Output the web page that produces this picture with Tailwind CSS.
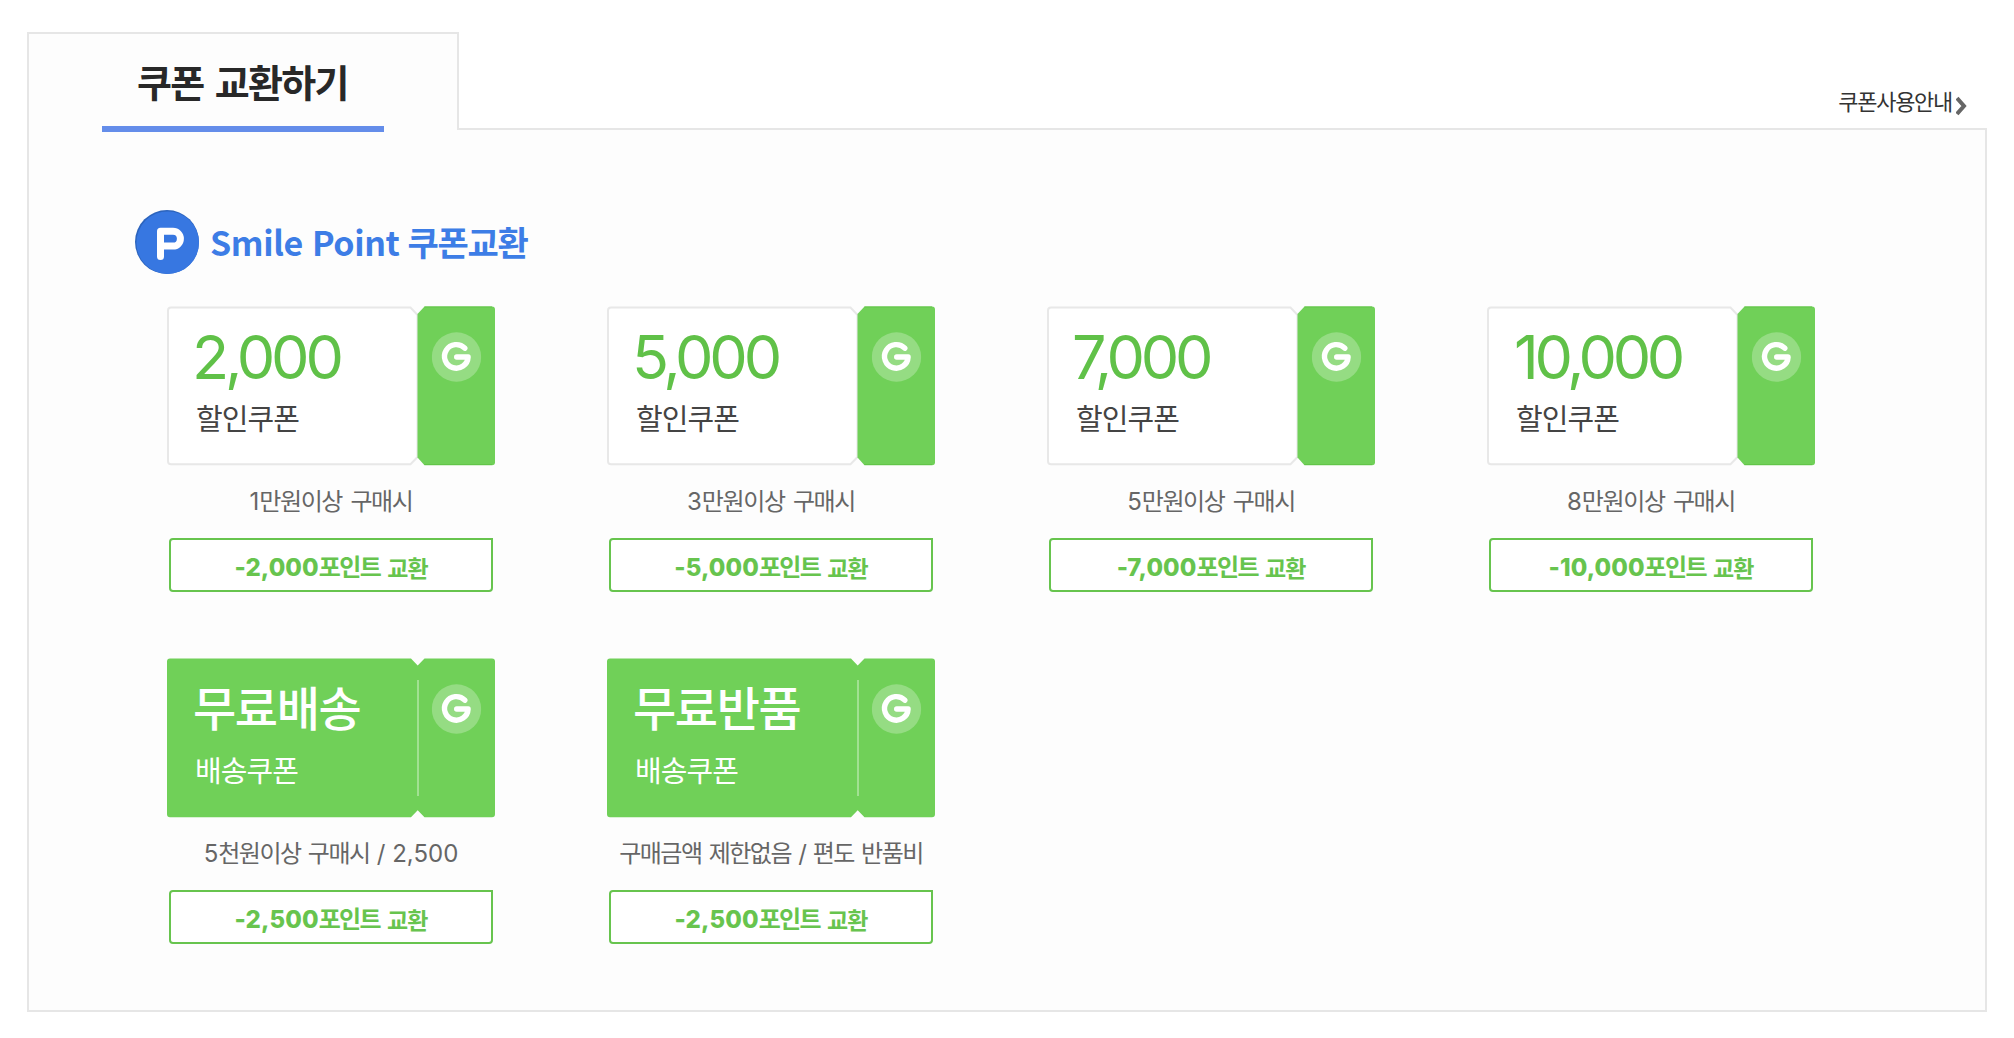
<!DOCTYPE html>
<html lang="ko">
<head>
    <meta charset="UTF-8">
    <meta name="viewport" content="width=device-width, initial-scale=1.0">
    <title>쿠폰 교환하기</title>
    <!-- TailwindCSS -->
    <script src="https://cdn.jsdelivr.net/npm/@tailwindcss/browser@4"></script>
    <style>
        body {
            font-family: 'Inter', 'Noto Sans CJK KR', sans-serif;
        }
    </style>
</head>
<body class="bg-white">
    <!-- 공통 SVG -->
    <svg class="hidden">
        <symbol id="badge-g" viewBox="0 0 50 50">
            <circle cx="25" cy="25" r="24.7" fill="#fff" fill-opacity=".26"/>
            <path d="M33.3 16.2A11.8 11.8 0 1 0 36.6 25H25.2" fill="none" stroke="#fff" stroke-width="5.4" stroke-linecap="round" stroke-linejoin="round"/>
        </symbol>
        <symbol id="ticket-white" viewBox="0 0 328 160">
            <path d="M4 1.5H243.5L250.5 9V151L243.5 158.2H4Q1 158.2 1 155.2V4.500Q1 1.500 4 1.500Z" fill="#fff" stroke="#e8e8e8" stroke-width="2"/>
            <path d="M257.500 .5H325Q328 .5 328 3.500V156.200Q328 159.200 325 159.200H257.500L250.500 151.500V8Z" fill="#70d058"/>
            <path d="M257.500 1H325M257.500 158.500H325" stroke="#62c549" stroke-width="1"/>
            <use href="#badge-g" x="264.500" y="26" width="50" height="50"/>
        </symbol>
        <symbol id="ticket-green" viewBox="0 0 328 160">
            <path d="M3 .5H244L250.700 7.500L257.500 .5H325Q328 .5 328 3.500V156.200Q328 159.200 325 159.200H257.500L250.700 152.200L244 159.200H3Q0 159.200 0 156.200V3.500Q0 .5 3 .5Z" fill="#70d058"/>
            <path d="M251 22V138" stroke="#a2e192" stroke-width="2"/>
            <use href="#badge-g" x="264.500" y="26" width="50" height="50"/>
        </symbol>
    </svg>

    <div class="w-[1960px] ml-[27px] pt-8">
        <!-- 탭 -->
        <header class="flex justify-between">
            <div class="relative z-10 w-[432px] h-[98px] bg-[#fdfdfd] border-2 border-b-0 border-[#e6e6e6]">
                <h1 class="ml-[108px] mt-[22px] h-[54px] leading-[54px] text-[38px] font-bold tracking-[-1.7px] [word-spacing:4px] text-[#282828] whitespace-nowrap">쿠폰 교환하기</h1>
                <div class="absolute left-[73px] top-[92px] w-[282px] h-1.5 bg-[#648dea]"></div>
            </div>
            <a href="#" class="flex items-center h-8 mt-[54px] mr-[20px] text-[22px] tracking-[-1.3px] text-[#333]">
                <span>쿠폰사용안내</span>
                <svg class="w-[11px] h-[20px] mt-2 ml-[4px]" viewBox="0 0 11 20" fill="none" stroke="#666" stroke-width="4"><path d="M1 2L8 10L1 18"/></svg>
            </a>
        </header>

        <main class="-mt-0.5 h-[884px] bg-[#fdfdfd] border-2 border-[#e6e6e6]">
            <div class="flex items-center h-[66px] mt-[79px] ml-[106px]">
                <svg class="w-16 h-[66px]" viewBox="0 0 64 66">
                    <circle cx="32" cy="33" r="32" fill="#2c64bd"/>
                    <circle cx="32.700" cy="33.700" r="31.300" fill="#3777e1"/>
                    <path d="M25.500 47.500V22.300H38A7.400 7.400 0 0 1 38 37.100H25.500" fill="none" stroke="#fff" stroke-width="7" stroke-linecap="round" stroke-linejoin="round"/>
                </svg>
                <h2 class="ml-[11px] text-[34px] leading-[66px] font-bold text-[#3d7de6] whitespace-nowrap font-['Noto_Sans_CJK_KR']"><span class="tracking-[-0.4px]">Smile Point</span><span class="ml-[8px] tracking-[-1.3px]">쿠폰교환</span></h2>
            </div>

            <!-- 쿠폰 목록 -->
            <ul class="grid grid-cols-[repeat(4,328px)] gap-x-28 gap-y-16 mt-[31px] ml-[138px]">
                <li class="h-72">
                    <div class="relative h-40">
                        <svg class="absolute inset-0 w-full h-full"><use href="#ticket-white"/></svg>
                        <div class="relative pl-[29px] pt-[17px]">
                            <p class="h-[70px] -ml-[4px] leading-[69px] text-[61px] tracking-[-4.2px] text-[#60c148]">2,000</p>
                            <p class="h-[54px] leading-[54px] text-[29px] tracking-[-0.9px] text-[#444]">할인쿠폰</p>
                        </div>
                    </div>
                    <p class="h-[72px] leading-[72px] text-[24px] text-center text-[#666] tracking-[-1.4px] [word-spacing:3px] whitespace-nowrap"><span class="tracking-normal">1</span>만원이상 구매시</p>
                    <a href="#" class="flex justify-center w-[324px] h-[54px] mx-auto bg-white border-2 border-[#67c44e] rounded-[4px] rounded-tr-none leading-[55px] text-[24px] font-bold text-[#67c44e]"><span class="font-extrabold tracking-[0.1px]">-2,000</span><span class="tracking-[-1.6px]">포인트</span><span class="ml-[7px] pt-[2px] text-[23px] tracking-[-1px]">교환</span></a>
                </li>
                <li class="h-72">
                    <div class="relative h-40">
                        <svg class="absolute inset-0 w-full h-full"><use href="#ticket-white"/></svg>
                        <div class="relative pl-[29px] pt-[17px]">
                            <p class="h-[70px] -ml-[4px] leading-[69px] text-[61px] tracking-[-4.2px] text-[#60c148]">5,000</p>
                            <p class="h-[54px] leading-[54px] text-[29px] tracking-[-0.9px] text-[#444]">할인쿠폰</p>
                        </div>
                    </div>
                    <p class="h-[72px] leading-[72px] text-[24px] text-center text-[#666] tracking-[-1.4px] [word-spacing:3px] whitespace-nowrap"><span class="tracking-normal">3</span>만원이상 구매시</p>
                    <a href="#" class="flex justify-center w-[324px] h-[54px] mx-auto bg-white border-2 border-[#67c44e] rounded-[4px] rounded-tr-none leading-[55px] text-[24px] font-bold text-[#67c44e]"><span class="font-extrabold tracking-[0.1px]">-5,000</span><span class="tracking-[-1.6px]">포인트</span><span class="ml-[7px] pt-[2px] text-[23px] tracking-[-1px]">교환</span></a>
                </li>
                <li class="h-72">
                    <div class="relative h-40">
                        <svg class="absolute inset-0 w-full h-full"><use href="#ticket-white"/></svg>
                        <div class="relative pl-[29px] pt-[17px]">
                            <p class="h-[70px] -ml-[4px] leading-[69px] text-[61px] tracking-[-4.2px] text-[#60c148]">7,000</p>
                            <p class="h-[54px] leading-[54px] text-[29px] tracking-[-0.9px] text-[#444]">할인쿠폰</p>
                        </div>
                    </div>
                    <p class="h-[72px] leading-[72px] text-[24px] text-center text-[#666] tracking-[-1.4px] [word-spacing:3px] whitespace-nowrap"><span class="tracking-normal">5</span>만원이상 구매시</p>
                    <a href="#" class="flex justify-center w-[324px] h-[54px] mx-auto bg-white border-2 border-[#67c44e] rounded-[4px] rounded-tr-none leading-[55px] text-[24px] font-bold text-[#67c44e]"><span class="font-extrabold tracking-[0.1px]">-7,000</span><span class="tracking-[-1.6px]">포인트</span><span class="ml-[7px] pt-[2px] text-[23px] tracking-[-1px]">교환</span></a>
                </li>
                <li class="h-72">
                    <div class="relative h-40">
                        <svg class="absolute inset-0 w-full h-full"><use href="#ticket-white"/></svg>
                        <div class="relative pl-[29px] pt-[17px]">
                            <p class="h-[70px] -ml-[2px] leading-[69px] text-[61px] tracking-[-4.4px] text-[#60c148]">10,000</p>
                            <p class="h-[54px] leading-[54px] text-[29px] tracking-[-0.9px] text-[#444]">할인쿠폰</p>
                        </div>
                    </div>
                    <p class="h-[72px] leading-[72px] text-[24px] text-center text-[#666] tracking-[-1.4px] [word-spacing:3px] whitespace-nowrap"><span class="tracking-normal">8</span>만원이상 구매시</p>
                    <a href="#" class="flex justify-center w-[324px] h-[54px] mx-auto bg-white border-2 border-[#67c44e] rounded-[4px] rounded-tr-none leading-[55px] text-[24px] font-bold text-[#67c44e]"><span class="font-extrabold tracking-[0.1px]">-10,000</span><span class="tracking-[-1.6px]">포인트</span><span class="ml-[7px] pt-[2px] text-[23px] tracking-[-1px]">교환</span></a>
                </li>
                <li class="h-72">
                    <div class="relative h-40">
                        <svg class="absolute inset-0 w-full h-full"><use href="#ticket-green"/></svg>
                        <div class="relative pl-[28px] pt-[17px] text-white">
                            <p class="h-[70px] -ml-[2px] leading-[67px] text-[47px] font-medium tracking-[-1.4px]">무료배송</p>
                            <p class="h-[54px] leading-[54px] text-[29px] tracking-[-0.9px]">배송쿠폰</p>
                        </div>
                    </div>
                    <p class="h-[72px] leading-[72px] text-[24px] text-center text-[#666] tracking-[-1.5px] [word-spacing:2px] whitespace-nowrap"><span class="tracking-normal">5</span>천원이상 구매시 <span class="tracking-normal [word-spacing:0px]">/ 2,500</span></p>
                    <a href="#" class="flex justify-center w-[324px] h-[54px] mx-auto bg-white border-2 border-[#67c44e] rounded-[4px] rounded-tr-none leading-[55px] text-[24px] font-bold text-[#67c44e]"><span class="font-extrabold tracking-[0.1px]">-2,500</span><span class="tracking-[-1.6px]">포인트</span><span class="ml-[7px] pt-[2px] text-[23px] tracking-[-1px]">교환</span></a>
                </li>
                <li class="h-72">
                    <div class="relative h-40">
                        <svg class="absolute inset-0 w-full h-full"><use href="#ticket-green"/></svg>
                        <div class="relative pl-[28px] pt-[17px] text-white">
                            <p class="h-[70px] -ml-[2px] leading-[67px] text-[47px] font-medium tracking-[-1.4px]">무료반품</p>
                            <p class="h-[54px] leading-[54px] text-[29px] tracking-[-0.9px]">배송쿠폰</p>
                        </div>
                    </div>
                    <p class="h-[72px] leading-[72px] text-[24px] text-center text-[#666] tracking-[-1.5px] [word-spacing:2px] whitespace-nowrap">구매금액 제한없음 / 편도 반품비</p>
                    <a href="#" class="flex justify-center w-[324px] h-[54px] mx-auto bg-white border-2 border-[#67c44e] rounded-[4px] rounded-tr-none leading-[55px] text-[24px] font-bold text-[#67c44e]"><span class="font-extrabold tracking-[0.1px]">-2,500</span><span class="tracking-[-1.6px]">포인트</span><span class="ml-[7px] pt-[2px] text-[23px] tracking-[-1px]">교환</span></a>
                </li>
            </ul>
        </main>
    </div>
</body>
</html>
